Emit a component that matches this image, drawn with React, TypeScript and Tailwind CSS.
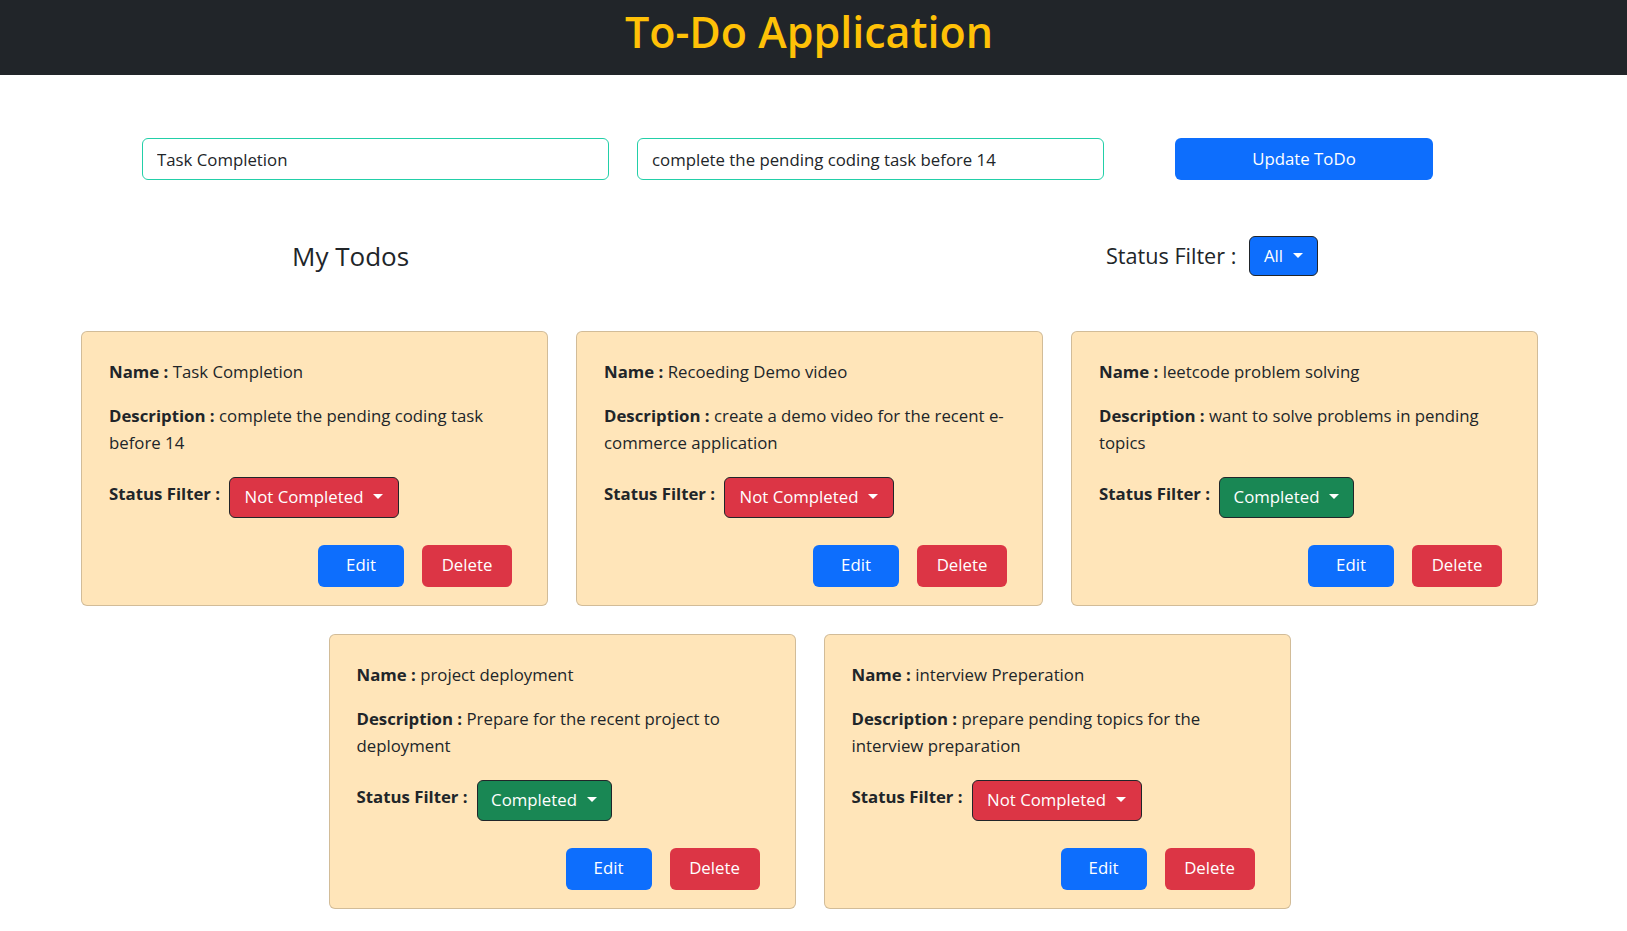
import React from "react";

type Todo = {
  name: string;
  desc: string;
  done: boolean;
};

const todos: Todo[] = [
  { name: "Task Completion", desc: "complete the pending coding task before 14", done: false },
  { name: "Recoeding Demo video", desc: "create a demo video for the recent e-commerce application", done: false },
  { name: "leetcode problem solving", desc: "want to solve problems in pending topics", done: true },
  { name: "project deployment", desc: "Prepare for the recent project to deployment", done: true },
  { name: "interview Preperation", desc: "prepare pending topics for the interview preparation", done: false },
];

function Caret() {
  return (
    <span className="ml-[10px] mb-[2px] inline-block w-0 h-0 border-t-[5px] border-t-white border-x-[5px] border-x-transparent" />
  );
}

function Card({ t }: { t: Todo }) {
  return (
    <div className="w-[467px] h-[275px] bg-[#ffe5b9] border border-[rgba(0,0,0,0.175)] rounded-[6px] pt-[27px] pl-[27px] pr-[20px] text-[#212529] text-[16.8px] leading-[26.7px]">
      <p className="mb-[17.6px]">
        <b className="font-bold">Name :</b> <span>{t.name}</span>
      </p>
      <p className="mb-[20px]">
        <b className="font-bold">Description :</b> <span>{t.desc}</span>
      </p>
      <div className="flex items-center h-[41px]">
        <b className="font-bold mb-[5px] w-[120px] shrink-0">Status Filter :</b>
        <button
          className={
            t.done
              ? "h-[41px] w-[135px] flex items-center justify-center rounded-[6px] border border-[#212529] bg-[#198754] text-white"
              : "h-[41px] w-[170px] flex items-center justify-center rounded-[6px] border border-[#212529] bg-[#dc3545] text-white"
          }
        >
          {t.done ? "Completed" : "Not Completed"}
          <Caret />
        </button>
      </div>
      <div className="flex justify-end gap-[18px] mt-[27px] pr-[15px]">
        <button className="w-[86px] h-[42px] rounded-[6px] bg-[#0d6efd] text-white">Edit</button>
        <button className="w-[90px] h-[42px] rounded-[6px] bg-[#dc3545] text-white">Delete</button>
      </div>
    </div>
  );
}

export default function App() {
  return (
    <div className="min-h-[931px] bg-white text-[#212529]" style={{ fontFamily: "'Open Sans', 'Noto Sans', sans-serif" }}>
      <header className="h-[75px] bg-[#212529] flex justify-center pt-[6px] pr-[9px]">
        <h1 className="text-[43px] leading-[52px] font-semibold text-[#ffc107]">To-Do Application</h1>
      </header>

      <div className="flex mt-[63px] ml-[142px]">
        <input
          readOnly
          value="Task Completion"
          className="w-[467px] h-[42px] border border-[#22cfa8] rounded-[6px] pl-[14px] text-[16.8px] text-[#212529] outline-none"
        />
        <input
          readOnly
          value="complete the pending coding task before 14"
          className="ml-[28px] w-[467px] h-[42px] border border-[#22cfa8] rounded-[6px] pl-[14px] text-[16.8px] text-[#212529] outline-none"
        />
        <button className="ml-[71px] w-[258px] h-[42px] rounded-[6px] bg-[#0d6efd] text-white text-[16.8px]">
          Update ToDo
        </button>
      </div>

      <div className="flex items-center h-[40px] mt-[56px]">
        <h4 className="ml-[292px] w-[117px] shrink-0 whitespace-nowrap text-[26px] leading-[30px] font-medium">My Todos</h4>
        <h5 className="ml-[697px] w-[130px] shrink-0 whitespace-nowrap text-[21.6px] leading-[26px] font-medium">Status Filter :</h5>
        <button className="ml-[13px] w-[69px] h-[40px] flex items-center justify-center rounded-[6px] border border-[#212529] bg-[#0d6efd] text-white text-[16.8px]">
          All
          <Caret />
        </button>
      </div>

      <div className="mt-[55px] ml-[81px] w-[1457px] flex flex-wrap justify-center gap-[28px] pb-[22px]">
        {todos.map((t, i) => (
          <Card key={i} t={t} />
        ))}
      </div>
    </div>
  );
}
